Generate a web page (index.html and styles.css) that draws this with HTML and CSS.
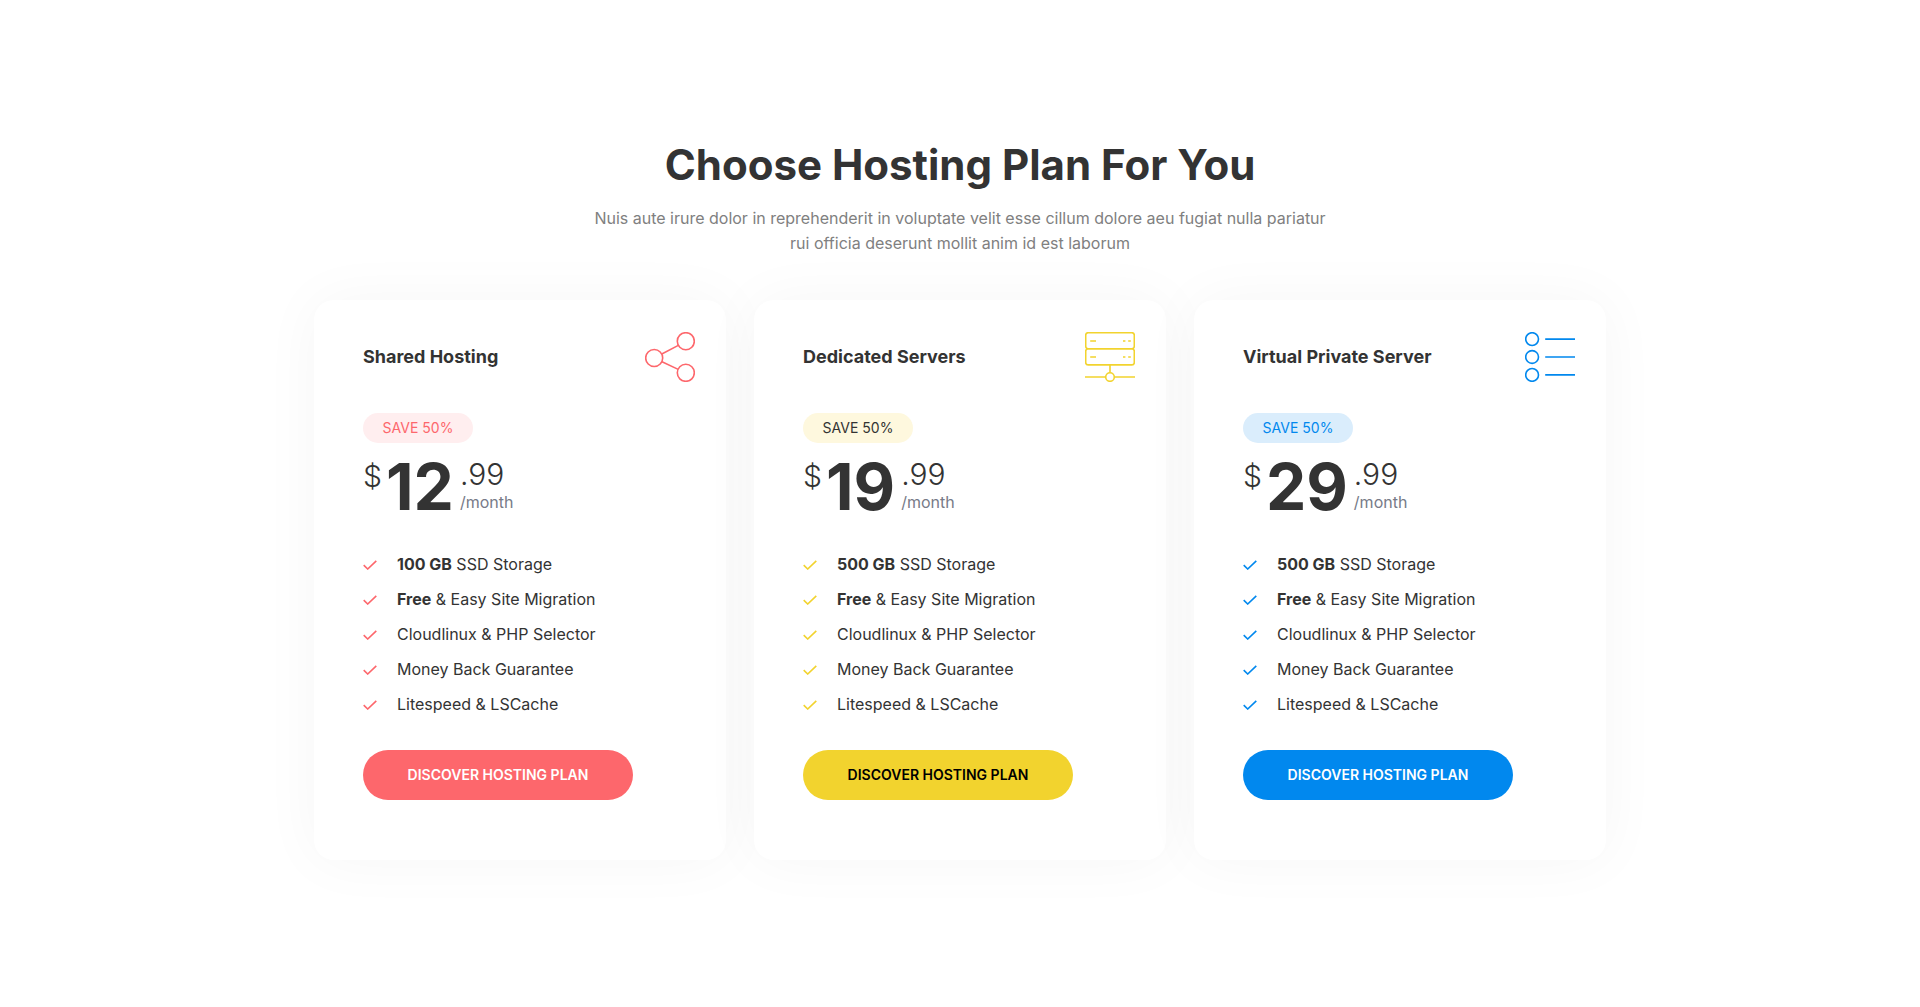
FILE: index.html
```html
<!DOCTYPE html>
<html lang="en">
<head>
<meta charset="utf-8">
<meta name="viewport" content="width=device-width, initial-scale=1">
<title>Choose Hosting Plan For You</title>
<link rel="stylesheet" href="styles.css">
</head>
<body>
<svg class="sprite" aria-hidden="true">
  <symbol id="check" viewBox="0 0 14 10"><path d="M.7 5.2 4.7 9 13.3.8" fill="none" stroke="currentColor" stroke-width="1.6"/></symbol>
</svg>
<main class="pricing">
  <header class="intro">
    <h1 class="intro-title">Choose Hosting Plan For You</h1>
    <p class="intro-text">Nuis aute irure dolor in reprehenderit in voluptate velit esse cillum dolore aeu fugiat nulla pariatur rui officia deserunt mollit anim id est laborum</p>
  </header>
  <div class="plans">
    <section class="plan plan-red">
      <div class="plan-head">
        <h2 class="plan-title">Shared Hosting</h2>
        <svg class="plan-icon" viewBox="0 0 50 50" aria-hidden="true"><circle cx="9.2" cy="26" r="8.5"/><circle cx="40.8" cy="9.2" r="8.5"/><circle cx="40.8" cy="40.8" r="8.5"/><path d="M16.8 22 33.3 13.4M17 29.8 33.2 37.4"/></svg>
      </div>
      <span class="badge">SAVE 50%</span>
      <p class="price"><span class="currency">$</span><strong class="amount">12</strong><span class="rest"><span class="cents">.99</span><span class="period">/month</span></span></p>
      <ul class="features">
        <li><svg class="tick" aria-hidden="true"><use href="#check"/></svg><span><b>100 GB</b> SSD Storage</span></li>
        <li><svg class="tick" aria-hidden="true"><use href="#check"/></svg><span><b>Free</b> &amp; Easy Site Migration</span></li>
        <li><svg class="tick" aria-hidden="true"><use href="#check"/></svg><span>Cloudlinux &amp; PHP Selector</span></li>
        <li><svg class="tick" aria-hidden="true"><use href="#check"/></svg><span>Money Back Guarantee</span></li>
        <li><svg class="tick" aria-hidden="true"><use href="#check"/></svg><span>Litespeed &amp; LSCache</span></li>
      </ul>
      <a class="cta" href="#">DISCOVER HOSTING PLAN</a>
    </section>
    <section class="plan plan-yellow">
      <div class="plan-head">
        <h2 class="plan-title">Dedicated Servers</h2>
        <svg class="plan-icon" viewBox="0 0 50 50" aria-hidden="true"><rect x=".7" y=".7" width="48.6" height="16.1" rx="2.5"/><rect x=".7" y="16.8" width="48.6" height="16.1" rx="2.5"/><path d="M5.2 9H11M38 9h2.4M43.2 9h2.6M5.2 25H11M38 25h2.4M43.2 25h2.6M25 33v7.7M0 45h20.7M29.3 45H50"/><circle cx="25" cy="45" r="4.3"/></svg>
      </div>
      <span class="badge">SAVE 50%</span>
      <p class="price"><span class="currency">$</span><strong class="amount">19</strong><span class="rest"><span class="cents">.99</span><span class="period">/month</span></span></p>
      <ul class="features">
        <li><svg class="tick" aria-hidden="true"><use href="#check"/></svg><span><b>500 GB</b> SSD Storage</span></li>
        <li><svg class="tick" aria-hidden="true"><use href="#check"/></svg><span><b>Free</b> &amp; Easy Site Migration</span></li>
        <li><svg class="tick" aria-hidden="true"><use href="#check"/></svg><span>Cloudlinux &amp; PHP Selector</span></li>
        <li><svg class="tick" aria-hidden="true"><use href="#check"/></svg><span>Money Back Guarantee</span></li>
        <li><svg class="tick" aria-hidden="true"><use href="#check"/></svg><span>Litespeed &amp; LSCache</span></li>
      </ul>
      <a class="cta" href="#">DISCOVER HOSTING PLAN</a>
    </section>
    <section class="plan plan-blue">
      <div class="plan-head">
        <h2 class="plan-title">Virtual Private Server</h2>
        <svg class="plan-icon" viewBox="0 0 50 50" aria-hidden="true"><circle cx="7.1" cy="7.1" r="6.4"/><circle cx="7.1" cy="25" r="6.4"/><circle cx="7.1" cy="42.9" r="6.4"/><path d="M20.2 7.1H50M20.2 25H50M20.2 42.9H50"/></svg>
      </div>
      <span class="badge">SAVE 50%</span>
      <p class="price"><span class="currency">$</span><strong class="amount">29</strong><span class="rest"><span class="cents">.99</span><span class="period">/month</span></span></p>
      <ul class="features">
        <li><svg class="tick" aria-hidden="true"><use href="#check"/></svg><span><b>500 GB</b> SSD Storage</span></li>
        <li><svg class="tick" aria-hidden="true"><use href="#check"/></svg><span><b>Free</b> &amp; Easy Site Migration</span></li>
        <li><svg class="tick" aria-hidden="true"><use href="#check"/></svg><span>Cloudlinux &amp; PHP Selector</span></li>
        <li><svg class="tick" aria-hidden="true"><use href="#check"/></svg><span>Money Back Guarantee</span></li>
        <li><svg class="tick" aria-hidden="true"><use href="#check"/></svg><span>Litespeed &amp; LSCache</span></li>
      </ul>
      <a class="cta" href="#">DISCOVER HOSTING PLAN</a>
    </section>
  </div>
</main>
</body>
</html>
```
FILE: styles.css
```css
* { box-sizing: border-box; margin: 0; padding: 0; }

body {
  background: #fff;
  color: #333;
  font-family: Inter, "Liberation Sans", sans-serif;
  font-size: 16px;
}

.sprite { display: none; }

.pricing {
  max-width: 1324px;
  margin: 0 auto;
  padding: 140px 16px;
}

.intro { text-align: center; }

.intro-title {
  font-size: 42px;
  font-weight: 700;
  line-height: 50px;
}

.intro-text {
  max-width: 740px;
  margin: 16px auto 0;
  color: #808080;
  line-height: 25px;
}

.plans {
  display: grid;
  grid-template-columns: repeat(auto-fit, minmax(340px, 1fr));
  gap: 28px;
  margin-top: 44px;
}

.plan {
  display: flex;
  flex-direction: column;
  align-items: flex-start;
  padding: 32px 31px 60px 49px;
  border-radius: 20px;
  background: #fff;
  box-shadow: 0 0 60px rgba(0, 0, 0, 0.04);
}

.plan-red { --accent: #fd676c; --tint: #ffeeef; --badge-text: #fd676c; --cta-text: #fff; }
.plan-yellow { --accent: #f2d32e; --tint: #fef8de; --badge-text: #333; --cta-text: #000; }
.plan-blue { --accent: #0188ee; --tint: #daedfc; --badge-text: #0188ee; --cta-text: #fff; }

.plan-head {
  display: flex;
  align-items: center;
  justify-content: space-between;
  align-self: stretch;
}

.plan-title {
  font-size: 18px;
  font-weight: 700;
  line-height: 24px;
}

.plan-icon {
  width: 50px;
  height: 50px;
  fill: none;
  stroke: var(--accent);
  stroke-width: 1.6;
}

.badge {
  width: 110px;
  margin-top: 31px;
  border-radius: 15px;
  background: var(--tint);
  color: var(--badge-text);
  font-size: 14px;
  line-height: 30px;
  text-align: center;
}

.price {
  display: flex;
  align-items: flex-start;
  margin-top: 12px;
}

.currency {
  font-size: 30px;
  font-weight: 300;
  line-height: 42px;
}

.amount {
  margin-left: 4px;
  font-size: 64px;
  font-weight: 700;
  line-height: 64px;
}

.rest { display: flex; flex-direction: column; margin-left: 6px; }

.cents {
  font-size: 30px;
  font-weight: 300;
  line-height: 38px;
}

.period {
  color: #777b88;
  line-height: 18px;
}

.features {
  margin-top: 28px;
  list-style: none;
}

.features li {
  display: flex;
  align-items: center;
  gap: 20px;
  line-height: 35px;
}

.features b { font-weight: 700; }

.tick { width: 14px; height: 10px; color: var(--accent); }

.cta {
  width: 270px;
  max-width: 100%;
  margin-top: 28px;
  border-radius: 25px;
  background: var(--accent);
  color: var(--cta-text);
  font-size: 14px;
  font-weight: 600;
  line-height: 50px;
  text-align: center;
  text-decoration: none;
}
```
